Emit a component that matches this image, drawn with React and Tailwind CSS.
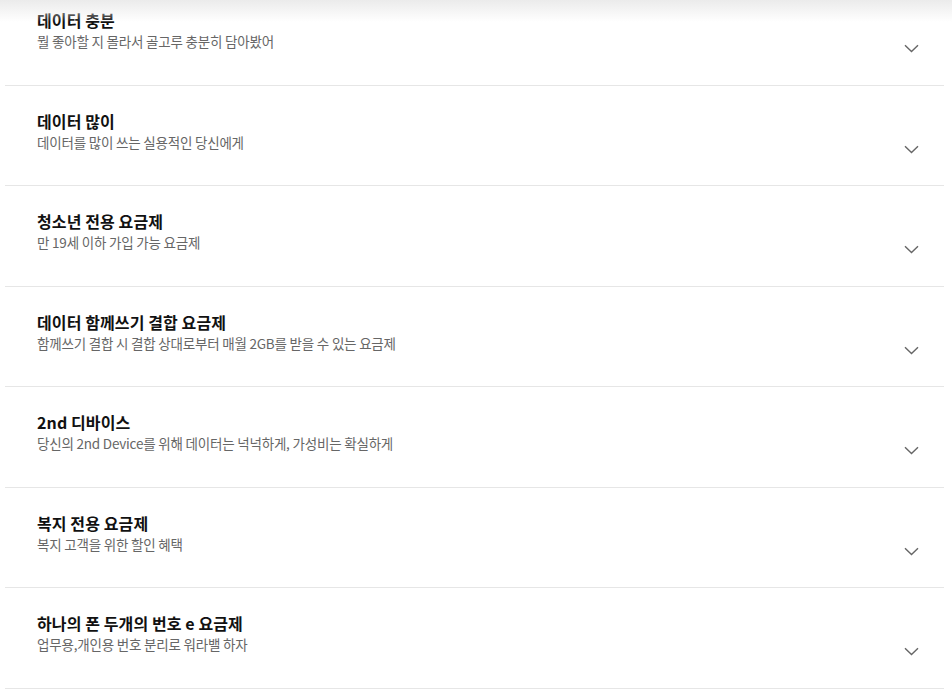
import React from 'react';

const plans = [
  { title: '데이터 충분', desc: '뭘 좋아할 지 몰라서 골고루 충분히 담아봤어' },
  { title: '데이터 많이', desc: '데이터를 많이 쓰는 실용적인 당신에게' },
  { title: '청소년 전용 요금제', desc: '만 19세 이하 가입 가능 요금제' },
  { title: '데이터 함께쓰기 결합 요금제', desc: '함께쓰기 결합 시 결합 상대로부터 매월 2GB를 받을 수 있는 요금제' },
  { title: '2nd 디바이스', desc: '당신의 2nd Device를 위해 데이터는 넉넉하게, 가성비는 확실하게' },
  { title: '복지 전용 요금제', desc: '복지 고객을 위한 할인 혜택' },
  { title: '하나의 폰 두개의 번호 e 요금제', desc: '업무용,개인용 번호 분리로 워라밸 하자' },
];

const Chevron = () => (
  <svg width="15" height="9" viewBox="0 0 15 9" fill="none">
    <path d="M1 1.2 L7.5 7.5 L14 1.2" stroke="#666" strokeWidth="1.4" />
  </svg>
);

const PlanRow = ({ title, desc }) => (
  <div className="flex h-[100.5px] border-b border-[#e6e6e6] pl-[32px] pr-[25px]">
    <div className="flex-1 pt-[24px]">
      <h3 className="text-[16px] leading-[22px] font-bold tracking-[0.1px] text-[#111]">{title}</h3>
      <p className="mt-[1px] text-[13.5px] leading-[18px] tracking-[-0.2px] text-[#666]">{desc}</p>
    </div>
    <div className="pt-[59px]">
      <Chevron />
    </div>
  </div>
);

export default function App() {
  return (
    <div
      className="relative h-[693px] w-[952px] overflow-hidden bg-white"
      style={{ fontFamily: '"Noto Sans CJK KR", "Noto Sans", sans-serif' }}
    >
      <div className="pointer-events-none absolute inset-x-0 top-0 z-10 h-[22px] bg-gradient-to-b from-[#ebebeb] to-white/0" />
      <div className="ml-[5px] w-[939px] -mt-[15px]">
        {plans.map((p) => (
          <PlanRow key={p.title} {...p} />
        ))}
      </div>
    </div>
  );
}
